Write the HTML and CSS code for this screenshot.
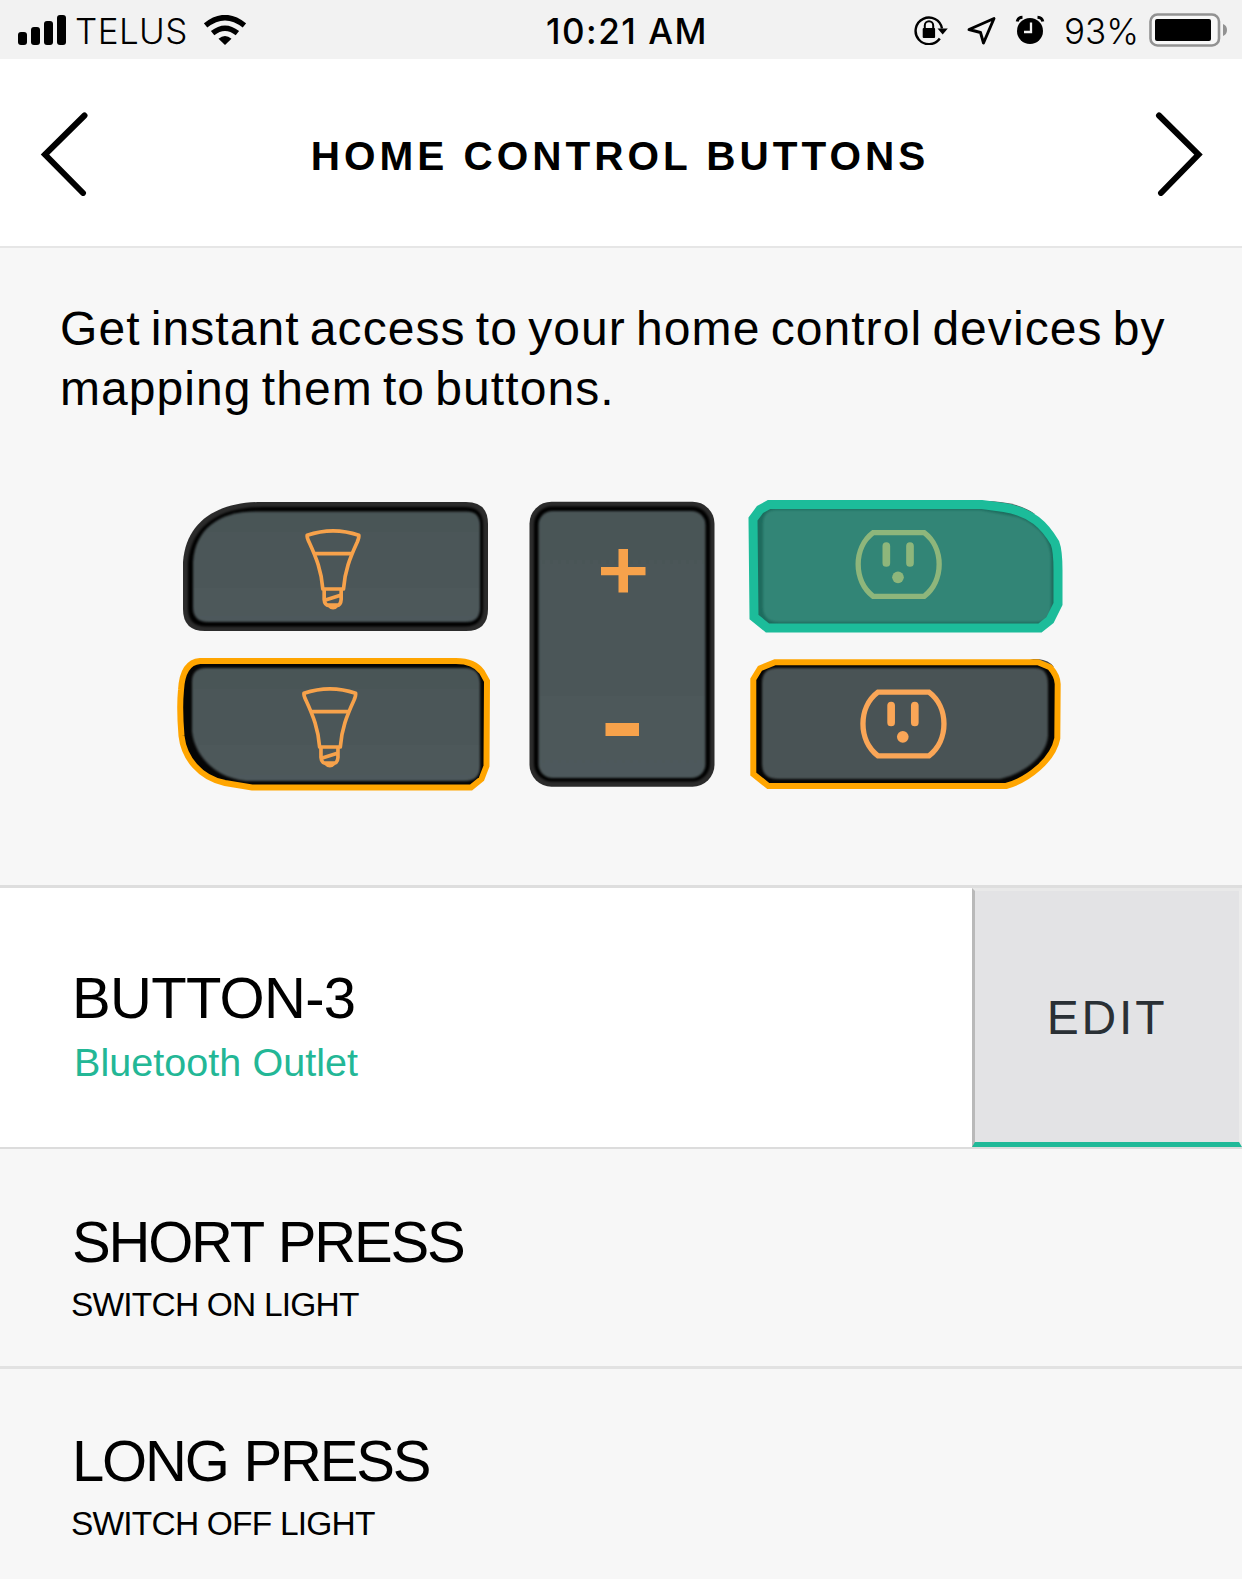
FILE: index.html
```html
<!DOCTYPE html>
<html lang="en">
<head>
<meta charset="utf-8">
<title>Home Control Buttons</title>
<link rel="stylesheet" href="styles.css">
</head>
<body>
<div class="status">
  <div class="status-left">
    <svg class="signal" width="48" height="30" viewBox="18 15 48 30"><rect x="18" y="32" width="9" height="13" rx="3"/><rect x="31" y="27" width="9" height="18" rx="3"/><rect x="44" y="21" width="9" height="24" rx="3"/><rect x="57" y="15" width="9" height="30" rx="3"/></svg>
    <span class="carrier">TELUS</span>
    <svg class="wifi" width="42" height="30" viewBox="204 15 42 30"><g fill="none" stroke="#000" stroke-width="5.4"><path d="M205.6 25.4Q225 9.8 244.4 25.4"/><path d="M212.6 33.2Q225 23.2 237.4 33.2"/></g><path d="M218.500 38.800Q225 33.200 231.500 38.800L225 45Z"/></svg>
  </div>
  <span class="time">10:21 AM</span>
  <div class="status-right">
    <svg class="lock" width="34" height="30" viewBox="914 15 34 30"><path d="M942 28.500A13.300 13.300 0 1 0 939.800 38.500" fill="none" stroke="#000" stroke-width="2.400"/><path d="M937.500 28.500H947.800L942.700 34.500Z"/><rect x="922.700" y="28" width="12.400" height="10" rx="1"/><path d="M924.800 29V25.500a4.200 4.200 0 0 1 8.400 0V29" fill="none" stroke="#000" stroke-width="2"/></svg>
    <svg class="arrow" width="29" height="30" viewBox="967 15 29 30"><path d="M969 29.500L994 18.500L983.500 43L980.500 32.500Z" fill="none" stroke="#000" stroke-width="2.900" stroke-linejoin="round"/></svg>
    <svg class="alarm" width="30" height="30" viewBox="1015 15 30 30"><circle cx="1030" cy="31" r="13"/><path d="M1017.200 21.500Q1018 17.500 1022.500 17.300M1042.800 21.500Q1042 17.500 1037.500 17.300" fill="none" stroke="#000" stroke-width="3"/><path d="M1031 22.500V32H1024" fill="none" stroke="#f2f2f2" stroke-width="2.300"/></svg>
    <span class="percent">93%</span>
    <svg class="battery" width="79" height="35" viewBox="1149 13 79 35"><rect x="1150.500" y="14.500" width="68.500" height="31" rx="7" fill="#f7f7f7" stroke="#929292" stroke-width="2.600"/><rect x="1155" y="19" width="56" height="22" rx="2"/><path d="M1223 24q4 1.500 4 6t-4 6Z" fill="#929292"/></svg>
  </div>
</div>

<header class="header">
  <svg class="chevron" width="48" height="84" viewBox="40 112 48 84"><path d="M84.500 115.500L45 154.500L83 193"/></svg>
  <h1 class="title">HOME CONTROL BUTTONS</h1>
  <svg class="chevron" width="48" height="84" viewBox="1155 112 48 84"><path d="M1159 115.500L1198.500 154.500L1161 193"/></svg>
</header>

<section class="intro">
  <p class="intro-text">Get instant access to your home control devices by<br>mapping them to buttons.</p>
  <svg class="remote" width="1242" height="320" viewBox="0 480 1242 320">
    <defs>
      <linearGradient id="slate" x1="0" y1="0" x2="0" y2="1"><stop offset="0" stop-color="#4a5557"/><stop offset="1" stop-color="#4e595b"/></linearGradient>
      <filter id="soft" x="-5%" y="-5%" width="110%" height="110%"><feGaussianBlur stdDeviation="1.300"/></filter>
      <g id="bulb" fill="none" stroke-width="11" stroke-linejoin="round">
        <path d="M428 151Q506 124 583 151Q584 158 578 172C556 220 541 258 537 312H475C471 258 456 220 434 172Q427 158 428 151Z"/>
        <path d="M451 206H561M479 312V343Q480 360 494 362Q506 374 517 362Q529 360 530 343V312M483 345L528 331M486 360H525"/>
      </g>
      <g id="outlet">
        <path d="M416 143H569C629 188 629 288 569 334H416C356 288 356 188 416 143Z" fill="none" stroke-width="16"/>
        <path d="M455.500 183V234M526.500 183V234" stroke-width="23" stroke-linecap="round"/>
        <circle cx="490.500" cy="277" r="17.500" stroke="none"/>
      </g>
    </defs>

    <path d="M262 502H466Q488 502 488 524V609Q488 631 466 631H205Q183 631 183 609V562C186 522 216 502 262 502Z" fill="#2b2b2b"/>
    <path d="M263 507H465Q483 507 483 525V608Q483 626.500 465 626.500H206Q188 626.500 188 608V563C191 526 219 507 263 507Z" filter="url(#soft)"/>
    <path d="M255 511.500H467Q480 511.500 480 526V608Q480 622 466 622H208Q193 622 193 607V562C195 529 219 511.500 255 511.500Z" fill="url(#slate)" filter="url(#soft)"/>
    <use href="#bulb" transform="translate(164.500 485) scale(.33333)" stroke="#f7a24b"/>

    <path d="M198 661H456L472 664L481 671L487 681L486 766L481 779L471 787.500H252L212 779L190 762L181 736V690L184 675L190 666Z" fill="#050505"/>
    <path d="M206 668H465Q480 668 480 684V766Q480 781 465 781H246C215 778 194 755 192 731V682Q192 668 206 668Z" fill="url(#slate)" filter="url(#soft)"/>
    <path d="M200 661H456C469 661 477 665 482 672L487 681L486.500 766L481.500 779L471 787.500H252L225 783C200 778 184 758 181.500 736C180 718 180 700 181 690C182 672 188 662 200 661Z" class="ring-orange"/>
    <use href="#bulb" transform="translate(161.300 643) scale(.33333)" stroke="#f7a24b"/>

    <rect x="529.500" y="501.700" width="185" height="285" rx="22" fill="#2b2b2b"/>
    <rect x="534" y="506.500" width="176" height="275" rx="18" filter="url(#soft)"/>
    <rect x="538.500" y="511" width="167" height="267" rx="14" fill="url(#slate)" filter="url(#soft)"/>
    <path d="M618.500 549H628V567H645.500V575.200H628V592.500H618.500V575.200H601V567H618.500ZM605.500 723H639V736H605.500Z" fill="#f7a24b"/>

    <path d="M984 501Q1017 501 1035 514L1022 512Z" fill="#5a5a5a"/>
    <path d="M770 504.700H982L1022 513L1043 527L1055 545L1058 604L1050 620L1039 628H767L754 617L753 519L760 510Z" fill="#1e6c5e"/>
    <path d="M776 510H980L1018 517C1040 526 1051 540 1051 560V604Q1051 622 1036 622H779Q763 622 763 607V524Q763 510 776 510Z" fill="#328576" filter="url(#soft)"/>
    <path d="M769 504.500H982L1004 507.500C1032 512 1045 526 1055 543C1058 551 1058 560 1058 570V604L1050 620L1040 628H767.500L754 617L753 519L760 509.500Z" class="ring-green"/>
    <use href="#outlet" transform="translate(734.500 485) scale(.33333)" stroke="#8eb67b" fill="#8eb67b"/>

    <path d="M1030 659H1038Q1049 660 1054 667L1040 662Z" fill="#444"/>
    <path d="M775 662H1038L1050 667L1057.700 682V738L1050 755L1032 773L1008 786H768L753 774V679L760 668Z" fill="#050505"/>
    <path d="M777 668H1035Q1048 668 1048 684V736C1046 758 1022 774 1000 779H778Q762 779 762 764V683Q762 668 777 668Z" fill="#485254" filter="url(#soft)"/>
    <path d="M775 662.300H1038L1050 667.300C1055 673 1057.500 678 1057.700 684L1057.300 738.300C1053 760 1028 780 1006 786H768.300L753.300 774V679.300L760 668.300Z" class="ring-orange"/>
    <use href="#outlet" transform="translate(739.300 644.500) scale(.33333)" stroke="#faa657" fill="#faa657"/>
  </svg>
</section>

<section class="device">
  <div class="device-info">
    <h2 class="device-name">BUTTON-3</h2>
    <p class="device-type">Bluetooth Outlet</p>
  </div>
  <button class="edit" type="button">EDIT</button>
</section>

<section class="action">
  <h2 class="action-name">SHORT PRESS</h2>
  <p class="action-desc">SWITCH ON LIGHT</p>
</section>
<section class="action action-last">
  <h2 class="action-name">LONG PRESS</h2>
  <p class="action-desc">SWITCH OFF LIGHT</p>
</section>
</body>
</html>
```
FILE: styles.css
```css
* { box-sizing: border-box; }
body {
  margin: 0;
  width: 1242px;
  height: 1579px;
  overflow: hidden;
  background: #f7f7f7;
  color: #000;
  font-family: "Liberation Sans", Arial, sans-serif;
}
h1, h2, p { margin: 0; font-weight: 400; white-space: nowrap; }
svg { display: block; flex: none; }

.status {
  display: grid;
  grid-template-columns: 546px auto auto;
  grid-template-rows: 59px;
  justify-content: start;
  align-items: center;
  height: 59px;
  background: #f2f2f2;
  font: 400 35px/54px Inter, sans-serif;
  white-space: nowrap;
}
.status-left, .status-right { display: flex; align-items: center; height: 59px; }
.status-left { padding-left: 18px; }
.carrier { width: 111px; margin: 2px 0 0 9px; font-weight: 360; letter-spacing: .4px; }
.wifi { margin-left: 18px; }
.time { width: 160px; margin-top: 2px; font-weight: 500; letter-spacing: 1.5px; }
.status-right { padding-left: 208px; }
.arrow { margin-left: 19px; }
.alarm { margin-left: 19px; }
.percent { width: 83px; margin: 2px 0 0 19px; font-weight: 360; letter-spacing: 0; }
.battery { margin-left: 2px; margin-top: 2px; }

.header {
  display: flex;
  justify-content: space-between;
  align-items: center;
  height: 189px;
  padding: 3px 39px 0 40px;
  background: #fff;
  border-bottom: 2px solid #e6e6e6;
}
.chevron path { fill: none; stroke: #000; stroke-width: 6; stroke-linecap: round; }
.title { margin-top: 4px; margin-right: 3px; font-size: 40.5px; font-weight: 700; letter-spacing: 4px; }

.intro { height: 637px; padding-top: 51px; }
.intro-text { padding-left: 60px; font-size: 48px; line-height: 60px; letter-spacing: 1.05px; word-spacing: -4.1px; }
.remote { margin-top: 61px; }
.ring-orange { fill: none; stroke: #ffa500; stroke-width: 6; }
.ring-green { fill: none; stroke: #1cbc9a; stroke-width: 9; }

.device {
  display: flex;
  justify-content: space-between;
  height: 264px;
  border-top: 3px solid #dedede;
  border-bottom: 2px solid #dcdcdc;
  background: #fff;
}
.device-info { padding: 80px 0 0 72px; }
.device-name { font-size: 58px; line-height: 60px; letter-spacing: -.7px; }
.device-type { margin: 9px 0 0 2px; font-size: 39.5px; line-height: 50px; letter-spacing: .05px; color: #23b796; }
.edit {
  width: 270px;
  height: 259px;
  padding: 3px 0 0 0;
  border-style: solid;
  border-width: 3px 3px 5px 3px;
  border-color: #e9e9e9 #ebebeb #20b998 #b9b9b9;
  background: #e3e3e5;
  color: #2a3035;
  font: 400 48px/60px "Liberation Sans", Arial, sans-serif;
  letter-spacing: 2.8px;
}

.action { height: 220px; padding: 63px 0 0 71px; border-bottom: 3px solid #e2e2e2; }
.action-last { height: 210px; padding-top: 62px; border-bottom: 0; }
.action-name { padding-left: 1px; font-size: 58px; line-height: 60px; letter-spacing: -2.2px; word-spacing: 2px; }
.action-desc { margin-top: 13px; font-size: 33.5px; line-height: 40px; letter-spacing: -.8px; }
```
